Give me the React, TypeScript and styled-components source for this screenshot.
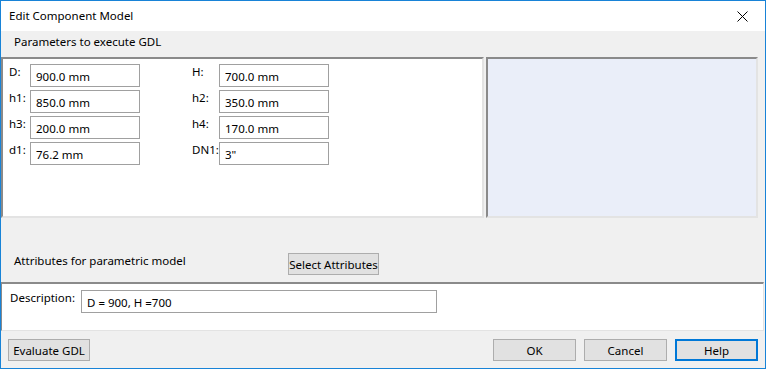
import { Fragment } from 'react';
import styled, { createGlobalStyle } from 'styled-components';

const Global = createGlobalStyle`
  html, body { margin: 0; padding: 0; background: #f0f0f0; }
  * { box-sizing: border-box; }
`;

const Window = styled.div`
  width: 766px;
  height: 369px;
  border: 1px solid #1883d7;
  background: #f0f0f0;
  font-family: "Noto Sans", "Open Sans", sans-serif;
  font-size: 11.5px;
  color: #000;
  display: flex;
  flex-direction: column;
  overflow: hidden;
`;

const TitleBar = styled.div`
  height: 30px;
  background: #fff;
  display: flex;
  align-items: center;
  justify-content: space-between;
  padding: 0 8px 0 8px;
  flex-shrink: 0;
`;

const Title = styled.span`
  margin-top: -1px;
`;

const CloseBtn = styled.span`
  width: 30px;
  display: flex;
  justify-content: center;
`;

const SectionLabel = styled.div`
  height: 26px;
  padding: 0 0 0 13px;
  display: flex;
  align-items: center;
  margin-top: -3px;
  flex-shrink: 0;
`;

const TopRow = styled.div`
  display: flex;
  height: 161px;
  gap: 2px;
  margin-top: 3px;
  flex-shrink: 0;
`;

const Sunken = styled.div<{ $bg: string }>`
  background: ${p => p.$bg};
  border-top: 2px solid #8a8a8a;
  border-left: 2px solid #8a8a8a;
  border-right: 2px solid #e3e3e3;
  border-bottom: 2px solid #e3e3e3;
`;

const ParamPanel = styled(Sunken)`
  width: 483px;
  padding: 5px 0 0 6px;
`;

const Preview = styled(Sunken)`
  width: 272px;
`;

const ParamGrid = styled.div`
  display: grid;
  grid-template-columns: 21px 110px 52px 27px 110px;
  grid-auto-rows: 23px;
  row-gap: 3px;
`;

const FieldLabel = styled.span`
  padding-top: 1px;
  line-height: 14px;
  white-space: nowrap;
`;

const Field = styled.div<{ $width?: number }>`
  width: ${p => (p.$width ? `${p.$width}px` : '100%')};
  height: 23px;
  background: #fff;
  border: 1px solid #a0a0a0;
  padding: 2px 5px 0;
  display: flex;
  align-items: center;
  white-space: nowrap;
`;

const AttrRow = styled.div`
  display: flex;
  align-items: center;
  height: 22px;
  margin-top: 35px;
  padding-left: 13px;
  flex-shrink: 0;
`;

const AttrLabel = styled.span`
  width: 274px;
  margin-top: -8px;
`;

const Button = styled.button<{ $default?: boolean; $width: number }>`
  width: ${p => p.$width}px;
  height: 22px;
  background: #e1e1e1;
  border: ${p => (p.$default ? '2px solid #0078d7' : '1px solid #adadad')};
  font-family: inherit;
  font-size: inherit;
  color: #000;
  padding: 0;
  margin: 0;
  white-space: nowrap;
`;

const DescPanel = styled.div`
  margin-top: 7px;
  height: 49px;
  width: 763px;
  background: #fff;
  border-top: 2px solid #8a8a8a;
  border-left: 1px solid #8a8a8a;
  border-right: 1px solid #e3e3e3;
  border-bottom: 1px solid #e3e3e3;
  display: flex;
  align-items: flex-start;
  padding: 6px 0 0 8px;
  flex-shrink: 0;
`;

const DescLabel = styled.span`
  width: 71px;
  padding-top: 1px;
  line-height: 14px;
`;

const ButtonRow = styled.div`
  display: flex;
  align-items: center;
  margin-top: 8px;
  padding: 0 7px;
  gap: 8px;
  flex-shrink: 0;
`;

const Spacer = styled.div`
  flex: 1;
`;

const params: [string, string, string, string][] = [
  ['D:', '900.0 mm', 'H:', '700.0 mm'],
  ['h1:', '850.0 mm', 'h2:', '350.0 mm'],
  ['h3:', '200.0 mm', 'h4:', '170.0 mm'],
  ['d1:', '76.2 mm', 'DN1:', '3"'],
];

export default function App() {
  return (
    <>
      <Global />
      <Window>
        <TitleBar>
          <Title>Edit Component Model</Title>
          <CloseBtn>
            <svg width="11" height="11" viewBox="0 0 11 11">
              <path d="M0.5 0.5 L10.5 10.5 M10.5 0.5 L0.5 10.5" stroke="#000" strokeWidth="1" fill="none" />
            </svg>
          </CloseBtn>
        </TitleBar>
        <SectionLabel>Parameters to execute GDL</SectionLabel>
        <TopRow>
          <ParamPanel $bg="#fff">
            <ParamGrid>
              {params.map(([l1, v1, l2, v2]) => (
                <Fragment key={l1}>
                  <FieldLabel>{l1}</FieldLabel>
                  <Field>{v1}</Field>
                  <span />
                  <FieldLabel>{l2}</FieldLabel>
                  <Field>{v2}</Field>
                </Fragment>
              ))}
            </ParamGrid>
          </ParamPanel>
          <Preview $bg="#eaeef9" />
        </TopRow>
        <AttrRow>
          <AttrLabel>Attributes for parametric model</AttrLabel>
          <Button $width={91}>Select Attributes</Button>
        </AttrRow>
        <DescPanel>
          <DescLabel>Description:</DescLabel>
          <Field $width={356}>D = 900, H =700</Field>
        </DescPanel>
        <ButtonRow>
          <Button $width={82}>Evaluate GDL</Button>
          <Spacer />
          <Button $width={83}>OK</Button>
          <Button $width={83}>Cancel</Button>
          <Button $width={83} $default>Help</Button>
        </ButtonRow>
      </Window>
    </>
  );
}
